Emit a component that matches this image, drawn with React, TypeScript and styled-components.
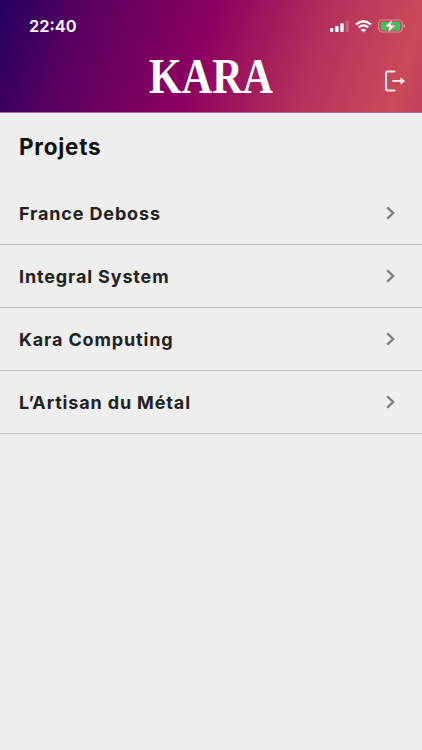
import React from "react";
import styled, { createGlobalStyle } from "styled-components";

const GlobalStyle = createGlobalStyle`
  * { box-sizing: border-box; }
  html, body, #root { height: 100%; }
  body { margin: 0; background: #eeeeee; font-family: Inter, "Liberation Sans", sans-serif; }
`;

const Screen = styled.main`
  min-height: 750px;
  display: flex;
  flex-direction: column;
  background: #eeeeee;
`;

const Header = styled.header`
  height: 113px;
  background: linear-gradient(109deg, #23005f 0%, #5a0061 19%, #8b0060 47%, #b3305c 72%, #ca4a5a 93%, #be405c 100%);
  border-bottom: 1px solid #a8698f;
  color: #fff;
`;

const StatusBar = styled.div`
  height: 52px;
  padding: 0 16px 0 29px;
  display: flex;
  align-items: center;
  justify-content: space-between;
`;

const Clock = styled.time`
  font-size: 16.5px;
  font-weight: 600;
  line-height: 20px;
  letter-spacing: 0;
`;

const StatusIcons = styled.div`
  display: flex;
  align-items: center;
  gap: 6px;
  svg { display: block; }
`;

const TitleBar = styled.div`
  height: 60px;
  padding: 0 16px;
  display: grid;
  grid-template-columns: 1fr 124px 1fr;
  align-items: start;
`;

const Wordmark = styled.svg`
  grid-column: 2;
  display: block;
  width: 124px;
  height: 50px;
  overflow: visible;
`;

const LogoutButton = styled.button`
  justify-self: end;
  margin: 18px 0 0;
  padding: 0;
  border: 0;
  background: none;
  color: #f6e3e7;
  svg { display: block; }
`;

const Heading = styled.h1`
  margin: 0;
  height: 69px;
  padding: 19px 19px 0;
  font-size: 22.5px;
  line-height: 30px;
  font-weight: 650;
  letter-spacing: 0.75px;
  color: #111;
`;

const List = styled.ul`
  margin: 0;
  padding: 0;
  list-style: none;
`;

const Row = styled.li`
  height: 63.1px;
  padding: 0 26px 0 19px;
  display: flex;
  align-items: center;
  justify-content: space-between;
  border-bottom: 1px solid #c2c2c2;
  font-size: 18px;
  font-weight: 650;
  letter-spacing: 0.85px;
  color: #222;
  svg { display: block; }
`;

const projects = ["France Deboss", "Integral System", "Kara Computing", "L’Artisan du Métal"];

const Signal = () => (
  <svg width="19" height="12" viewBox="0 0 19 12" fill="#fff">
    <rect x="0" y="8" width="3.4" height="4" rx="1" />
    <rect x="5.2" y="6" width="3.4" height="6" rx="1" />
    <rect x="10.3" y="3.2" width="3.4" height="8.8" rx="1" />
    <rect x="15.5" y="0.5" width="3.4" height="11.5" rx="1" opacity=".2" />
  </svg>
);

const Wifi = () => (
  <svg width="17" height="13" viewBox="0 0 17 13" fill="none" stroke="#fff">
    <path d="M1 4.5Q8.5-2 16 4.5" strokeWidth="2.3" />
    <path d="M3.7 7.4Q8.5 3.3 13.3 7.4" strokeWidth="2.2" />
    <path d="M5.8 9.8Q8.5 7.6 11.2 9.8L8.5 12.6Z" fill="#fff" stroke="none" />
  </svg>
);

const Battery = () => (
  <svg width="28" height="14" viewBox="0 0 28 14">
    <rect x=".7" y="1" width="23.6" height="12" rx="3.6" fill="none" stroke="#fff" strokeOpacity=".42" strokeWidth="1.1" />
    <rect x="2.6" y="2.7" width="19.6" height="8.8" rx="2.1" fill="#35c759" />
    <path d="M25.7 5v4c1.9-.7 1.9-3.3 0-4Z" fill="#fff" opacity=".5" />
    <path d="M14.6 0 6.8 7.9H11.2L9.7 14l8-7.9h-4.6Z" fill="#fff" stroke="#c64a60" strokeWidth=".6" />
  </svg>
);

const Logout = () => (
  <svg width="22" height="22" viewBox="0 0 22 22" fill="none" stroke="currentColor" strokeWidth="2.1" strokeLinejoin="round" strokeLinecap="round">
    <path d="M10.5 1.5H4Q2 1.5 2 3.5v15Q2 20.5 4 20.5h6.5" />
    <path d="M9 11h9" />
    <path d="M16.5 7.2v7.600L21.200 11Z" fill="currentColor" stroke="none" />
  </svg>
);

const Chevron = () => (
  <svg width="10" height="14" viewBox="0 0 10 14" fill="none" stroke="#7d7d7d" strokeWidth="2.3">
    <path d="m1.3 1.3 5.9 5.700-5.900 5.700" />
  </svg>
);

export default function App() {
  return (
    <>
      <GlobalStyle />
      <Screen>
        <Header>
          <StatusBar>
            <Clock>22:40</Clock>
            <StatusIcons>
              <Signal />
              <Wifi />
              <Battery />
            </StatusIcons>
          </StatusBar>
          <TitleBar>
            <Wordmark viewBox="0 0 124 50" role="img" aria-label="KARA">
              <text
                y="40.5"
                x="0"
                textLength="124"
                lengthAdjust="spacingAndGlyphs"
                fill="#fff"
                fontFamily="'Liberation Serif', serif"
                fontSize="50"
                fontWeight="700"
              >
                KARA
              </text>
            </Wordmark>
            <LogoutButton aria-label="Déconnexion">
              <Logout />
            </LogoutButton>
          </TitleBar>
        </Header>
        <Heading>Projets</Heading>
        <List>
          {projects.map((name) => (
            <Row key={name}>
              <span>{name}</span>
              <Chevron />
            </Row>
          ))}
        </List>
      </Screen>
    </>
  );
}
